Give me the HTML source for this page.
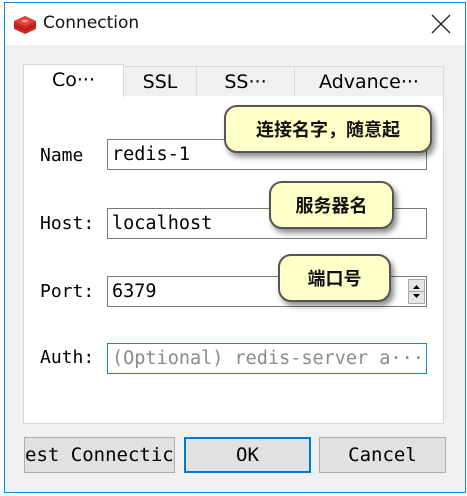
<!DOCTYPE html>
<html><head><meta charset="utf-8"><style>
*{box-sizing:border-box;margin:0;padding:0}
body{width:467px;height:496px;background:#fff;position:relative;overflow:hidden;font-family:"DejaVu Sans Mono","Liberation Mono",monospace}
.abs{position:absolute}
.win{left:4px;top:2px;width:462px;height:491px;border:1px solid #1883d7;background:#f0f0f0}
.title{left:5px;top:3px;width:460px;height:42px;background:#fff}
.tab{position:absolute;background:#f0f0f0;border:1px solid #d9d9d9;border-bottom:none;font-family:"DejaVu Sans",sans-serif;font-size:19px;text-align:center;color:#000}
.panel{left:23px;top:95px;width:421px;height:329px;background:#fff;border:1px solid #d9d9d9}
.lbl{font-size:18px;color:#000}
.fld{position:absolute;left:107px;width:320px;height:31px;border:1px solid #7a7a7a;background:#fff;font-size:18.5px;padding-left:4px;line-height:29px;white-space:nowrap;overflow:hidden}
.tip{position:absolute;background:#ffffc8;border:2px solid #555;border-radius:13px;box-shadow:3px 4px 6px rgba(0,0,0,.45);font-family:"Noto Sans CJK SC",sans-serif;font-weight:bold;font-size:18px;text-align:center;color:#111}
.btn{position:absolute;top:437px;height:36px;background:#e1e1e1;border:1px solid #adadad;font-size:19px;text-align:center;line-height:34px;overflow:hidden;white-space:nowrap}
</style></head><body>
<div class="abs win"></div>
<div class="abs title"></div>
<svg class="abs" style="left:13px;top:13px" width="24" height="22" viewBox="0 0 24 22">
<path d="M1 8 L12 3 L23 8 L23 16 L12 21 L1 16Z" fill="#c92a24"/>
<path d="M1 8 L12 13 L23 8 L12 3Z" fill="#e8423a"/>
<path d="M1 12 L12 17 L23 12" stroke="#a01d18" fill="none" stroke-width="1"/>
<ellipse cx="12" cy="8" rx="3" ry="1.4" fill="#f5a0a0"/>
</svg>
<div class="abs" style="left:43px;top:13px;font-family:'DejaVu Sans',sans-serif;font-size:17px;color:#111">Connection</div>
<svg class="abs" style="left:431px;top:14px" width="20" height="20"><path d="M1 1L19 19M19 1L1 19" stroke="#222" stroke-width="1.3"/></svg>
<div class="abs panel"></div>
<div class="tab" style="left:123px;top:66px;width:74px;height:30px;line-height:30px">SSL</div>
<div class="tab" style="left:196px;top:66px;width:99px;height:30px;line-height:30px">SS···</div>
<div class="tab" style="left:294px;top:66px;width:150px;height:30px;line-height:30px">Advance···</div>
<div class="tab" style="left:23px;top:64px;width:101px;height:33px;line-height:30px;background:#fff">Co···</div>
<div class="abs lbl" style="left:40px;top:145px">Name</div>
<div class="abs lbl" style="left:40px;top:213px">Host:</div>
<div class="abs lbl" style="left:40px;top:281px">Port:</div>
<div class="abs lbl" style="left:40px;top:347px">Auth:</div>
<div class="fld" style="top:139px">redis-1</div>
<div class="fld" style="top:208px">localhost</div>
<div class="fld" style="top:276px">6379</div>
<div class="abs" style="left:408px;top:279px;width:17px;height:25px;background:#e6e6e6;border:1px solid #aaa"></div>
<svg class="abs" style="left:408px;top:279px" width="17" height="25"><path d="M5 10L8.5 6L12 10Z M5 15L8.5 19L12 15Z" fill="#000"/><path d="M1 12.5H16" stroke="#aaa"/></svg>
<div class="fld" style="top:343px;border-color:#1883d7;color:#8a8a8a">(Optional) redis-server a···</div>
<div class="tip" style="left:224px;top:105px;width:208px;height:48px;line-height:44px">连接名字，随意起</div>
<div class="tip" style="left:269px;top:181px;width:125px;height:48px;line-height:44px">服务器名</div>
<div class="tip" style="left:278px;top:254px;width:113px;height:48px;line-height:44px">端口号</div>
<div class="btn" style="left:24px;width:151px;text-align:left">est Connectic</div>
<div class="btn" style="left:184px;width:127px;border:2px solid #0078d7;line-height:32px">OK</div>
<div class="btn" style="left:319px;width:127px">Cancel</div>
</body></html>
